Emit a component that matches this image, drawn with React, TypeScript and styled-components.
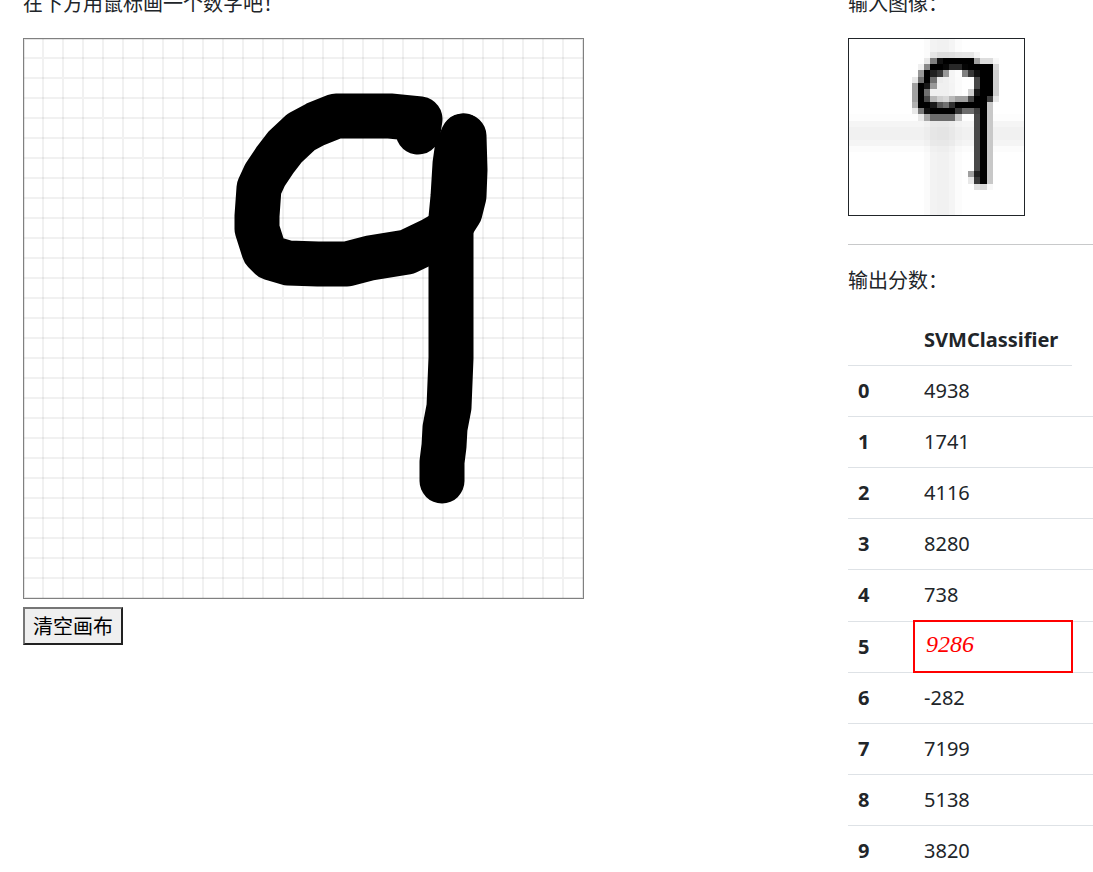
import React from "react";
import styled, { createGlobalStyle } from "styled-components";

const GlobalStyle = createGlobalStyle`
  *, *::before, *::after { box-sizing: border-box; }
  body {
    margin: 0;
    background: #fff;
    color: #212529;
    font-family: "Noto Sans", "Noto Sans CJK SC", sans-serif;
    font-size: 20px;
    line-height: 30px;
  }
`;

const Page = styled.main`
  display: grid;
  grid-template-columns: minmax(0, 825fr) minmax(0, 245fr);
  margin-top: -12px;
  padding-left: 23px;
`;

const Column = styled.section`
  min-width: 0;
`;

const Caption = styled.p`
  margin: 0 0 20px;
  font-family: "Noto Sans CJK SC", sans-serif;
  font-weight: 400;
  white-space: nowrap;
`;

const DrawingBoard = styled.svg`
  display: block;
  margin-bottom: 8px;
`;

const InputPreview = styled.svg`
  display: block;
  border: 1px solid #212529;
`;

const ClearButton = styled.button`
  padding: 2px 8px;
  border: 2px solid;
  border-color: #767676 #212121 #212121 #767676;
  border-radius: 0;
  background: #efefef;
  color: #000;
  font-family: "Noto Sans CJK SC", sans-serif;
  font-size: 20px;
  font-weight: 400;
  line-height: 30px;
`;

const Divider = styled.hr`
  height: 1px;
  margin: 28px 0 20px;
  border: 0;
  background: #c8c9ca;
`;

const ScoreTable = styled.table`
  width: 100%;
  table-layout: fixed;
  border-collapse: collapse;
`;

const IndexCol = styled.col`
  width: 66px;
`;

const SpareCol = styled.col`
  width: 21px;
`;

const HeadCell = styled.th`
  padding: 10px;
  border-bottom: 1px solid #dee2e6;
  font-weight: 700;
  text-align: left;
  vertical-align: top;
`;

const ScoreCell = styled.td<{ $best?: boolean }>`
  padding: 10px;
  border-bottom: 1px solid #dee2e6;
  vertical-align: top;
  ${({ $best }) =>
    $best &&
    `
    padding: 7px 10px 11px 11px;
    border: 2px solid #f00;
    color: #f00;
    font-family: "Liberation Serif", serif;
    font-size: 24px;
    font-style: italic;
  `}
`;

const SIZE = 560;
const CELL = 20;
const gridSteps = Array.from({ length: SIZE / CELL - 1 }, (_, i) => (i + 1) * CELL);

const loopStroke =
  "M418 132L420 119L390 116L336 116L316 124L301 132L285 147L275 160L265 175L259 188L257 216L257 229L264 251L271 258L288 263L318 264L347 264L370 258L407 252L432 240L446 232L453 223L460 212L464 196L465 170L464 136";
const stemStroke =
  "M463 136L457 150L455 164L453 197L451 218L451 358L449 407L445 428L444 446L442 462L442 481";

const vBand: Record<number, number> = { 12: 251, 13: 243, 14: 241, 15: 241, 16: 245, 17: 252 };
const hBand: Record<number, number> = { 12: 253, 13: 245, 14: 241, 15: 241, 16: 245, 17: 252 };

// Ink of the downscaled digit: row -> [first column, hex grey levels].
const ink: Record<number, [number, string]> = {
  2: [13, "e6 dc dc de e3 e5 e5 f5"],
  3: [12, "e8 7f 12 00 00 00 00 00 a0 dd dd f8"],
  4: [11, "f0 88 00 00 08 28 28 05 00 00 00 00 d8"],
  5: [11, "98 00 20 38 98 f5 fc 80 38 10 00 00 d0"],
  6: [10, "e8 70 00 70 ec f0 f5 fb ff ff 48 00 00 d0"],
  7: [10, "a0 00 18 98 f0 f0 f4 fb ff ff 48 00 00 d0"],
  8: [10, "a0 00 70 f0 f0 f0 f4 fb ff d0 18 00 00 d0"],
  9: [10, "a0 00 48 b8 d0 d8 b8 a0 a0 48 00 00 40 e8"],
  10: [10, "b0 00 00 18 58 70 30 00 00 00 00 00 c8"],
  11: [10, "e8 78 10 00 00 00 00 38 6c 6c 40 00 c8"],
  12: [11, "e8 a8 6c 6c 6c 6c c8 fd fd 48 00 c8"],
  21: [19, "a0 20 00 c8"],
  22: [19, "e8 38 00 c8"],
  23: [20, "e0 d8 f8"],
};
for (let r = 13; r <= 20; r++) ink[r] = [20, "48 00 c8"];

const previewPixels: { x: number; y: number; v: number }[] = [];
for (let y = 0; y < 28; y++) {
  for (let x = 0; x < 28; x++) {
    let v = Math.round(((vBand[x] ?? 255) * (hBand[y] ?? 255)) / 255);
    const row = ink[y];
    if (row) {
      const level = row[1].split(" ")[x - row[0]];
      if (level) v = parseInt(level, 16);
    }
    if (v < 255) previewPixels.push({ x, y, v });
  }
}

const scores = [4938, 1741, 4116, 8280, 738, 9286, -282, 7199, 5138, 3820];
const best = Math.max(...scores);

export default function App() {
  return (
    <>
      <GlobalStyle />
      <Page>
        <Column>
          <Caption>在下方用鼠标画一个数字吧！</Caption>
          <DrawingBoard width="561" height="561" viewBox="0 0 561 561" role="img" aria-label="9">
            <g stroke="#000" strokeOpacity="0.055" strokeWidth="2">
              {gridSteps.map((p) => (
                <path key={p} d={`M${p} 0V561M0 ${p}H561`} />
              ))}
            </g>
            <rect x="1.5" y="1.5" width="558" height="558" fill="none" stroke="#000" strokeOpacity="0.1" />
            <rect x="0.5" y="0.5" width="560" height="560" fill="none" stroke="#808080" />
            <g
              transform="translate(-23 -38)"
              fill="none"
              stroke="#000"
              strokeWidth="45"
              strokeLinecap="round"
              strokeLinejoin="round"
            >
              <path d={loopStroke} />
              <path d={stemStroke} />
            </g>
          </DrawingBoard>
          <ClearButton type="button">清空画布</ClearButton>
        </Column>
        <Column>
          <Caption>输入图像：</Caption>
          <InputPreview width="177" height="178" viewBox="0 0 28 28" preserveAspectRatio="none" shapeRendering="crispEdges" role="img" aria-label="28 × 28">
            {previewPixels.map(({ x, y, v }) => (
              <rect key={`${x}-${y}`} x={x} y={y} width="1" height="1" fill={`rgb(${v},${v},${v})`} />
            ))}
          </InputPreview>
          <Divider />
          <Caption>输出分数：</Caption>
          <ScoreTable>
            <colgroup>
              <IndexCol />
              <col />
              <SpareCol />
            </colgroup>
            <thead>
              <tr>
                <HeadCell />
                <HeadCell scope="col">SVMClassifier</HeadCell>
              </tr>
            </thead>
            <tbody>
              {scores.map((score, digit) => (
                <tr key={digit}>
                  <HeadCell scope="row">{digit}</HeadCell>
                  <ScoreCell $best={score === best}>{score}</ScoreCell>
                  <ScoreCell />
                </tr>
              ))}
            </tbody>
          </ScoreTable>
        </Column>
      </Page>
    </>
  );
}
